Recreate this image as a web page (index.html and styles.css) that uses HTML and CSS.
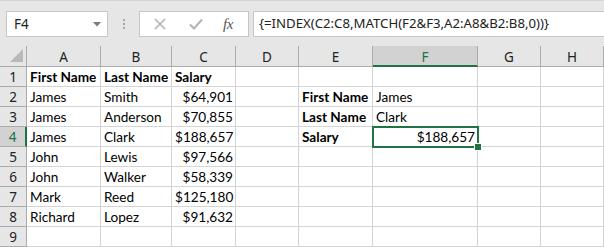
FILE: index.html
```html
<!DOCTYPE html>
<html>
<head>
<meta charset="utf-8">
<link rel="stylesheet" href="styles.css">
</head>
<body>
<div class="app">
  <div class="toolbar">
    <div class="namebox">
      <span class="name">F4</span>
      <svg class="caret" width="8" height="5" viewBox="0 0 8 5"><path d="M0 0H8L4 4.5Z" fill="#7a7a7a"/></svg>
    </div>
    <div class="grip"><i></i><i></i><i></i></div>
    <div class="fbuttons">
      <svg class="ic" width="14" height="14" viewBox="0 0 14 14"><path d="M2 2L12 12M12 2L2 12" stroke="#b3b3b3" stroke-width="1.6" fill="none"/></svg>
      <svg class="ic" width="16" height="14" viewBox="0 0 16 14"><path d="M2 7.5L6 11.5L14 2.5" stroke="#b3b3b3" stroke-width="2" fill="none"/></svg>
      <span class="fx">fx</span>
    </div>
    <div class="formula">{=INDEX(C2:C8,MATCH(F2&amp;F3,A2:A8&amp;B2:B8,0))}</div>
  </div>
  <div class="grid">
    <div class="h corner"><svg width="13" height="13" viewBox="0 0 13 13"><path d="M13 0V13H0Z" fill="#b9b9b9"/></svg></div>
    <div class="h col">A</div><div class="h col">B</div><div class="h col">C</div><div class="h col">D</div><div class="h col">E</div><div class="h col sel">F</div><div class="h col">G</div><div class="h col">H</div>

    <div class="h row">1</div><div class="c b">First Name</div><div class="c b">Last Name</div><div class="c b">Salary</div><div class="c"></div><div class="c"></div><div class="c"></div><div class="c"></div><div class="c"></div>
    <div class="h row">2</div><div class="c">James</div><div class="c">Smith</div><div class="c r">$64,901</div><div class="c"></div><div class="c b">First Name</div><div class="c">James</div><div class="c"></div><div class="c"></div>
    <div class="h row">3</div><div class="c">James</div><div class="c">Anderson</div><div class="c r">$70,855</div><div class="c"></div><div class="c b">Last Name</div><div class="c">Clark</div><div class="c"></div><div class="c"></div>
    <div class="h row rsel">4</div><div class="c">James</div><div class="c">Clark</div><div class="c r">$188,657</div><div class="c"></div><div class="c b">Salary</div><div class="c r active">$188,657<span class="handle"></span></div><div class="c"></div><div class="c"></div>
    <div class="h row">5</div><div class="c">John</div><div class="c">Lewis</div><div class="c r">$97,566</div><div class="c"></div><div class="c"></div><div class="c"></div><div class="c"></div><div class="c"></div>
    <div class="h row">6</div><div class="c">John</div><div class="c">Walker</div><div class="c r">$58,339</div><div class="c"></div><div class="c"></div><div class="c"></div><div class="c"></div><div class="c"></div>
    <div class="h row">7</div><div class="c">Mark</div><div class="c">Reed</div><div class="c r">$125,180</div><div class="c"></div><div class="c"></div><div class="c"></div><div class="c"></div><div class="c"></div>
    <div class="h row">8</div><div class="c">Richard</div><div class="c">Lopez</div><div class="c r">$91,632</div><div class="c"></div><div class="c"></div><div class="c"></div><div class="c"></div><div class="c"></div>
    <div class="h row">9</div><div class="c"></div><div class="c"></div><div class="c"></div><div class="c"></div><div class="c"></div><div class="c"></div><div class="c"></div><div class="c"></div>
  </div>
</div>
</body>
</html>
```
FILE: styles.css
```css
* { box-sizing: border-box; }
html, body { margin: 0; padding: 0; background: #ffffff; }
.app { width: 604px; height: 247px; overflow: hidden; background: #e6e6e6; }
.toolbar {
  height: 46px;
  display: flex;
  align-items: flex-start;
  border-top: 1px solid #d5d5d5;
  padding-top: 10px;
}
.namebox {
  margin-left: 6px;
  width: 102px;
  height: 26px;
  background: #fff;
  border: 1px solid #c6c6c6;
  display: flex;
  align-items: center;
  justify-content: space-between;
  padding: 0 6px 0 7px;
  font-family: "Noto Sans", sans-serif;
  font-size: 13.5px;
  color: #222;
}
.caret { margin-top: 1px; }
.grip {
  width: 31px;
  height: 26px;
  display: flex;
  flex-direction: column;
  align-items: center;
  justify-content: center;
  gap: 2px;
}
.grip i { display: block; width: 2px; height: 2px; background: #a6a6a6; }
.fbuttons {
  width: 110px;
  height: 26px;
  background: #fff;
  border: 1px solid #c6c6c6;
  display: flex;
  align-items: center;
  padding-left: 13px;
  gap: 21px;
}
.fx {
  font-family: "Liberation Serif", serif;
  font-style: italic;
  font-size: 15px;
  color: #555;
  margin-left: -2px;
  letter-spacing: -0.5px;
}
.formula {
  margin-left: 4px;
  flex: 1;
  height: 26px;
  background: #fff;
  border: 1px solid #c6c6c6;
  border-right: none;
  padding-left: 5px;
  line-height: 23px;
  font-family: "Noto Sans", sans-serif;
  font-size: 13.2px;
  color: #222;
  white-space: nowrap;
}
.grid {
  display: grid;
  grid-template-columns: 27px 74px 71px 64px 63px 74px 105px 63px 63px;
  grid-template-rows: 21px repeat(9, 20px);
  background: #fff;
}
.h {
  background: #e6e6e6;
  font-family: "Noto Sans", sans-serif;
  font-size: 13.5px;
  color: #222;
  display: flex;
  align-items: center;
  justify-content: center;
}
.col {
  border-right: 1px solid #ababab;
  border-bottom: 1px solid #ababab;
  padding-top: 1px;
}
.corner {
  border-right: 1px solid #ababab;
  border-bottom: 1px solid #ababab;
  align-items: flex-end;
  justify-content: flex-end;
  padding: 0 3px 4px 0;
}
.col.sel {
  background: #d2d2d2;
  color: #217346;
  border-bottom: 2px solid #217346;
  padding-top: 2px;
}
.row {
  border-right: 1px solid #ababab;
  border-bottom: 1px solid #ababab;
  padding-top: 1px;
}
.row.rsel {
  background: #d2d2d2;
  color: #217346;
  border-right: 2px solid #217346;
}
.c {
  position: relative;
  border-right: 1px solid #d4d4d4;
  border-bottom: 1px solid #d4d4d4;
  font-family: Lato, "Liberation Sans", sans-serif;
  font-size: 13.6px;
  color: #000;
  padding: 1px 2px 0 3px;
  line-height: 19px;
  white-space: nowrap;
}
.b { font-weight: bold; }
.r { text-align: right; }
.active {
  outline: 2px solid #217346;
  outline-offset: -1px;
  z-index: 2;
}
.handle {
  position: absolute;
  right: -4px;
  bottom: -4px;
  width: 6px;
  height: 6px;
  background: #217346;
  border: 1px solid #fff;
  box-sizing: content-box;
  margin: -1px;
}
```
